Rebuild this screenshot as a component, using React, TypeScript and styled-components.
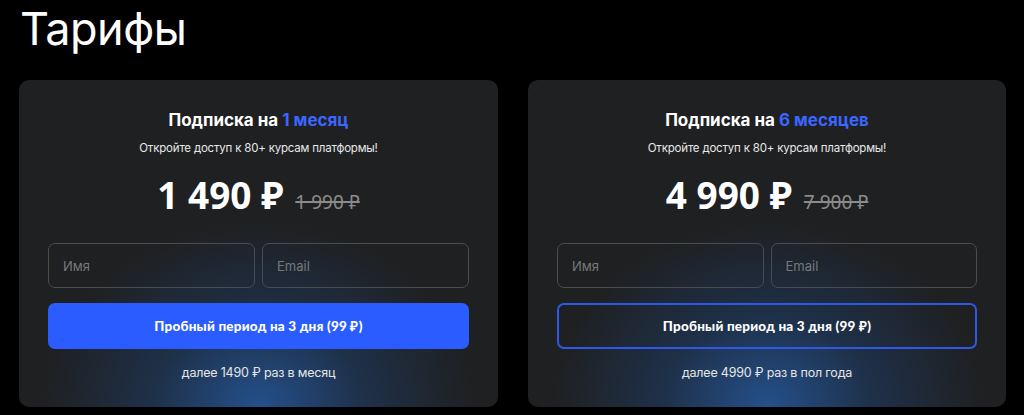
import React from "react";
import styled, { createGlobalStyle } from "styled-components";

const Global = createGlobalStyle`
  html, body { margin: 0; padding: 0; background: #000; }
  body { font-family: "Inter", "Noto Sans", sans-serif; color: #fff; }
  * { box-sizing: border-box; }
`;

const Page = styled.div`
  width: 1024px;
  height: 415px;
  overflow: hidden;
  background: #000;
  padding: 0 18px 0 19px;
`;

const Heading = styled.h1`
  margin: 0;
  padding: 2px 0 0 1px;
  font-family: "Inter", sans-serif;
  font-weight: 400;
  font-size: 45px;
  line-height: 54px;
  height: 80px;
  letter-spacing: -0.5px;
  color: #fff;
`;

const Grid = styled.div`
  display: grid;
  grid-template-columns: 479px 478px;
  column-gap: 30px;
`;

const Card = styled.div`
  height: 327px;
  border-radius: 10px;
  background:
    radial-gradient(ellipse 60% 75% at 50% 100%, rgba(36, 80, 140, 1) 0%, rgba(30, 58, 96, 0.6) 38%, rgba(31, 32, 35, 0) 75%),
    #1f2022;
  padding: 28px 29px 0;
  display: flex;
  flex-direction: column;
  align-items: stretch;
  text-align: center;
`;

const Title = styled.div`
  font-family: "Inter", sans-serif;
  font-weight: 700;
  font-size: 17px;
  line-height: 24px;
  color: #fff;
`;

const Accent = styled.span`
  color: #3b66ff;
`;

const Subtitle = styled.div`
  margin-top: 8px;
  font-family: "Inter", sans-serif;
  font-size: 11.5px;
  line-height: 16px;
  color: #e8e8e8;
  letter-spacing: -0.2px;
`;

const PriceRow = styled.div`
  margin-top: 17px;
  height: 44px;
  display: flex;
  justify-content: center;
  align-items: baseline;
  gap: 12px;
`;

const Price = styled.span`
  font-family: "Noto Sans", sans-serif;
  font-weight: 700;
  font-size: 37px;
  line-height: 44px;
  color: #fff;
`;

const OldPrice = styled.span`
  font-family: "Noto Sans", sans-serif;
  font-weight: 400;
  font-size: 19px;
  line-height: 24px;
  color: #8b8b8b;
  text-decoration: line-through;
  text-decoration-thickness: 1.5px;
`;

const Fields = styled.div`
  margin-top: 26px;
  display: grid;
  grid-template-columns: minmax(0, 1fr) minmax(0, 1fr);
  gap: 7px;
`;

const Field = styled.input`
  width: 100%;
  min-width: 0;
  height: 45px;
  border: 1px solid #4b4c4f;
  border-radius: 7px;
  background: transparent;
  padding: 0 14px;
  font-family: "Inter", sans-serif;
  font-size: 13px;
  color: #fff;
  outline: none;
  &::placeholder { color: #77787b; }
`;

const Button = styled.button<{ $outline?: boolean }>`
  margin-top: 15px;
  height: 46px;
  border-radius: 7px;
  border: 2px solid ${(p) => (p.$outline ? "#2f58e6" : "#2b5cff")};
  background: ${(p) => (p.$outline ? "transparent" : "#2b5cff")};
  color: #fff;
  font-family: "Lato", sans-serif;
  font-weight: 900;
  font-size: 13.5px;
  letter-spacing: 0.2px;
  cursor: pointer;
`;

const Note = styled.div`
  margin-top: 15px;
  font-family: "Inter", sans-serif;
  font-size: 12.5px;
  line-height: 18px;
  color: #e6e6e6;
  letter-spacing: -0.2px;
`;

type Plan = {
  period: string;
  price: string;
  old: string;
  note: string;
  outline?: boolean;
};

const plans: Plan[] = [
  { period: "1 месяц", price: "1 490 ₽", old: "1 990 ₽", note: "далее 1490 ₽ раз в месяц" },
  { period: "6 месяцев", price: "4 990 ₽", old: "7 900 ₽", note: "далее 4990 ₽ раз в пол года", outline: true },
];

export default function App() {
  return (
    <Page>
      <Global />
      <Heading>Тарифы</Heading>
      <Grid>
        {plans.map((p) => (
          <Card key={p.period}>
            <Title>
              Подписка на <Accent>{p.period}</Accent>
            </Title>
            <Subtitle>Откройте доступ к 80+ курсам платформы!</Subtitle>
            <PriceRow>
              <Price>{p.price}</Price>
              <OldPrice>{p.old}</OldPrice>
            </PriceRow>
            <Fields>
              <Field placeholder="Имя" />
              <Field placeholder="Email" />
            </Fields>
            <Button $outline={p.outline}>Пробный период на 3 дня (99 ₽)</Button>
            <Note>{p.note}</Note>
          </Card>
        ))}
      </Grid>
    </Page>
  );
}
